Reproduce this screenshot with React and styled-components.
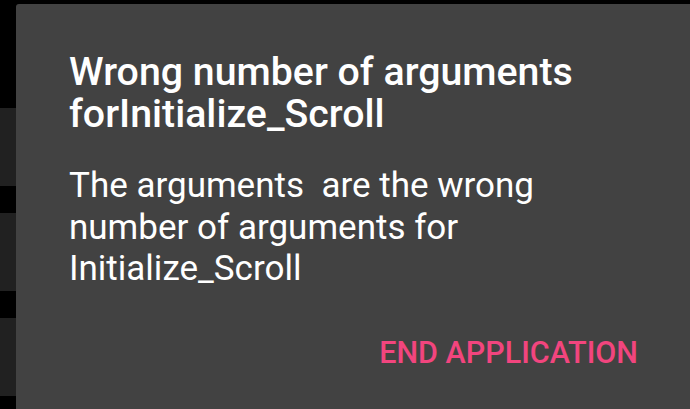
import React from 'react'
import styled, { createGlobalStyle } from 'styled-components'

const GlobalStyle = createGlobalStyle`
  html, body {
    margin: 0;
    padding: 0;
    background: #000;
  }
  body {
    font-family: Roboto, "Noto Sans", Arial, sans-serif;
    -webkit-font-smoothing: antialiased;
  }
`

const Screen = styled.div`
  display: flex;
  height: 409px;
  width: 690px;
  overflow: hidden;
  padding-top: 4px;
  box-sizing: border-box;
`

// list rows peeking out behind the dialog
const Backdrop = styled.div`
  display: flex;
  flex-direction: column;
  gap: 27px;
  width: 16px;
  flex-shrink: 0;
  padding-top: 104px;
`

const BackdropRow = styled.div`
  height: 78px;
  background: #212121;
`

const Dialog = styled.div`
  flex: 1;
  display: flex;
  flex-direction: column;
  background: #424242;
  border-top-left-radius: 3px;
  padding: 47px 52px 0 53px;
`

const Title = styled.h2`
  margin: 0;
  color: #fff;
  font-size: 39.3px;
  line-height: 42px;
  font-weight: 500;
  white-space: nowrap;
`

const Message = styled.p`
  margin: 30px 0 0;
  color: #fff;
  font-size: 35px;
  line-height: 41.5px;
  font-weight: 400;
  white-space: pre;
`

const Actions = styled.div`
  display: flex;
  justify-content: flex-end;
  margin-top: 45px;
`

const ActionButton = styled.button`
  border: 0;
  background: none;
  padding: 0;
  font-family: inherit;
  color: #f2457e;
  font-size: 30.5px;
  line-height: 36px;
  font-weight: 500;
  text-transform: uppercase;
  white-space: nowrap;
  cursor: pointer;
`

const App = () => (
  <React.Fragment>
    <GlobalStyle />
    <Screen>
      <Backdrop>
        <BackdropRow />
        <BackdropRow />
        <BackdropRow />
      </Backdrop>
      <Dialog>
        <Title>
          Wrong number of arguments
          <br />
          forInitialize_Scroll
        </Title>
        <Message>
          {'The arguments  are the wrong\nnumber of arguments for\nInitialize_Scroll'}
        </Message>
        <Actions>
          <ActionButton>End Application</ActionButton>
        </Actions>
      </Dialog>
    </Screen>
  </React.Fragment>
)

export default App
